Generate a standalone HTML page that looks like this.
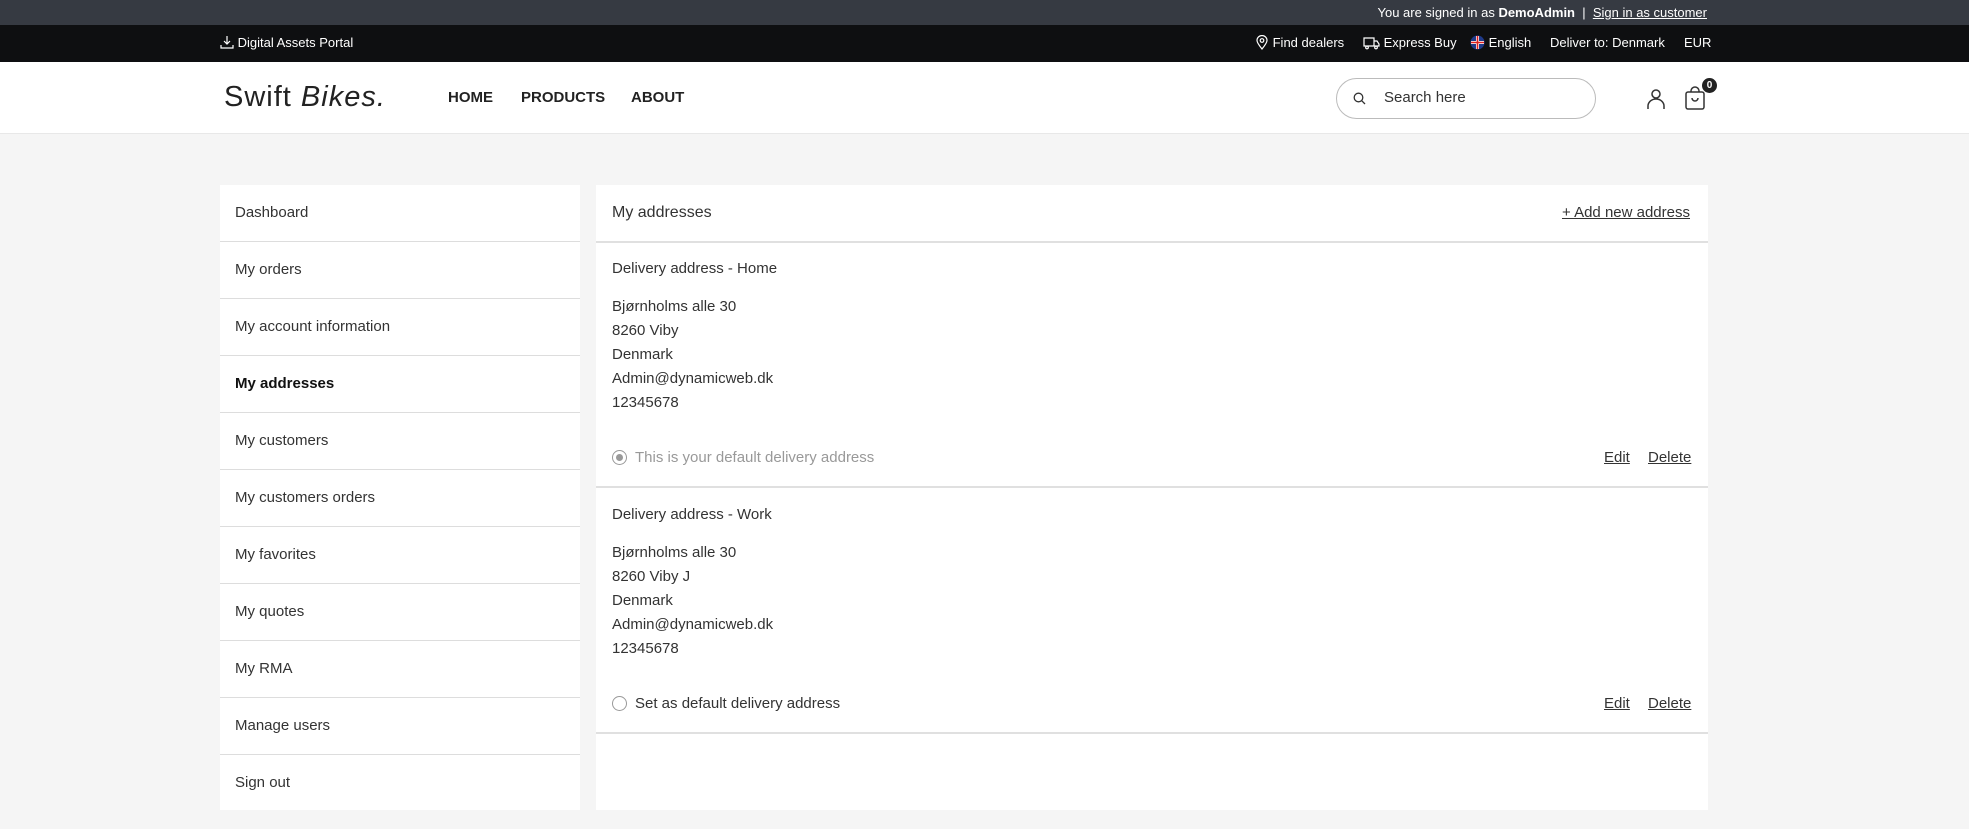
<!DOCTYPE html>
<html><head><meta charset="utf-8"><style>
*{margin:0;padding:0;box-sizing:border-box}
body{width:1969px;height:829px;background:#f5f5f5;font-family:"Liberation Sans",sans-serif;color:#222;position:relative;overflow:hidden}
.a{position:absolute;white-space:nowrap}
#t1{left:0;top:0;width:1969px;height:25px;background:#363a42}
#t2{left:0;top:25px;width:1969px;height:37px;background:#0e0f11}
#hd{left:0;top:62px;width:1969px;height:72px;background:#fff;border-bottom:1px solid #e8e8e8}
.w{color:#fff;font-size:13px}
.side{left:220px;top:185px;width:360px;height:625px;background:#fff}
.side div{height:57px;border-bottom:1px solid #ddd;padding-left:15px;line-height:56px;font-size:15px;color:#333}
.side div:last-child{border-bottom:none}
.main{left:596px;top:185px;width:1112px;height:625px;background:#fff}
.tx{font-size:15px;color:#333}
u{text-decoration:underline}
.sep{position:absolute;left:0;width:1112px;height:2px;background:#e0e0e0}
</style></head><body>
<div id="t1" class="a"></div>
<div id="t2" class="a"></div>
<div id="hd" class="a"></div>
<div class="a w" style="right:262px;top:5px">You are signed in as <b>DemoAdmin</b> &nbsp;|&nbsp; <u>Sign in as customer</u></div>
<div class="a w" style="left:220px;top:35px"><svg width="14" height="14" viewBox="0 0 14 14" style="vertical-align:-2px" fill="none" stroke="#fff" stroke-width="1.2"><path d="M7 1v8M4 6l3 3 3-3M1 10v3h12v-3"/></svg> Digital Assets Portal</div>
<div class="a w" style="left:1255px;top:35px"><svg width="14" height="15" viewBox="0 0 14 15" style="vertical-align:-3px" fill="none" stroke="#fff" stroke-width="1.2"><path d="M7 14C3 9 2 7 2 5.5a5 5 0 0 1 10 0C12 7 11 9 7 14z"/><circle cx="7" cy="5.5" r="1.8"/></svg> Find dealers</div>
<div class="a w" style="left:1363px;top:35px"><svg width="17" height="14" viewBox="0 0 17 14" style="vertical-align:-3px" fill="none" stroke="#fff" stroke-width="1.2"><path d="M1 2h10v8H1zM11 5h3l2 3v2h-5"/><circle cx="4" cy="11.5" r="1.3"/><circle cx="13" cy="11.5" r="1.3"/></svg> Express Buy</div>
<div class="a w" style="left:1470px;top:35px"><svg width="15" height="15" viewBox="0 0 15 15" style="vertical-align:-3px"><circle cx="7.5" cy="7.5" r="7" fill="#1f3a8a"/><path d="M1 7.5h13M7.5 1v13" stroke="#fff" stroke-width="3"/><path d="M1 7.5h13M7.5 1v13" stroke="#d22" stroke-width="1.6"/></svg> English</div>
<div class="a w" style="left:1550px;top:35px">Deliver to: Denmark</div>
<div class="a w" style="left:1684px;top:35px">EUR</div>
<div class="a" style="left:224px;top:81px;font-size:29px;color:#222;letter-spacing:1px">Swift <i>Bikes.</i></div>
<div class="a" style="left:448px;top:89px;font-size:15px;font-weight:bold;color:#222">HOME</div>
<div class="a" style="left:521px;top:89px;font-size:15px;font-weight:bold;color:#222">PRODUCTS</div>
<div class="a" style="left:631px;top:89px;font-size:15px;font-weight:bold;color:#222">ABOUT</div>
<div class="a" style="left:1336px;top:78px;width:260px;height:41px;border:1px solid #bbb;border-radius:21px;background:#fff"></div>
<svg class="a" style="left:1353px;top:92px" width="13" height="13" viewBox="0 0 13 13" fill="none" stroke="#333" stroke-width="1.3"><circle cx="5.5" cy="5.5" r="4.3"/><path d="M8.7 8.7L12 12"/></svg>
<div class="a" style="left:1384px;top:89px;font-size:15px;color:#333">Search here</div>
<svg class="a" style="left:1646px;top:88px" width="20" height="22" viewBox="0 0 20 22" fill="none" stroke="#333" stroke-width="1.5"><circle cx="10" cy="6" r="4"/><path d="M2 21v-3a8 7 0 0 1 16 0v3"/></svg>
<svg class="a" style="left:1684px;top:86px" width="22" height="24" viewBox="0 0 22 24" fill="none" stroke="#333" stroke-width="1.5"><rect x="2" y="6" width="18" height="17" rx="2"/><path d="M7 6V5a4 4 0 0 1 8 0v1M8 12a3 3 0 0 0 6 0"/></svg>
<div class="a" style="left:1702px;top:78px;width:15px;height:15px;border-radius:50%;background:#222;color:#fff;font-size:10px;font-weight:bold;text-align:center;line-height:15px">0</div>

<div class="a side">
<div>Dashboard</div><div>My orders</div><div>My account information</div><div style="font-weight:bold;color:#111">My addresses</div><div>My customers</div><div>My customers orders</div><div>My favorites</div><div>My quotes</div><div>My RMA</div><div>Manage users</div><div>Sign out</div>
</div>

<div class="a main">
<div class="a tx" style="left:16px;top:19px;font-size:16px">My addresses</div>
<div class="a tx" style="right:18px;top:19px"><u>+ Add new address</u></div>
<div class="sep" style="top:56px"></div>

<div class="a tx" style="left:16px;top:75px">Delivery address - Home</div>
<div class="a tx" style="left:16px;top:110px;line-height:24px">Bjørnholms alle 30<br>8260 Viby<br>Denmark<br>Admin@dynamicweb.dk<br>12345678</div>
<div class="a" style="left:16px;top:265px;width:15px;height:15px;border:1px solid #999;border-radius:50%"><div style="margin:3px;width:7px;height:7px;border-radius:50%;background:#999"></div></div>
<div class="a tx" style="left:39px;top:264px;color:#999">This is your default delivery address</div>
<div class="a tx" style="left:1008px;top:264px"><u>Edit</u></div>
<div class="a tx" style="left:1052px;top:264px"><u>Delete</u></div>
<div class="sep" style="top:301px"></div>

<div class="a tx" style="left:16px;top:321px">Delivery address - Work</div>
<div class="a tx" style="left:16px;top:356px;line-height:24px">Bjørnholms alle 30<br>8260 Viby J<br>Denmark<br>Admin@dynamicweb.dk<br>12345678</div>
<div class="a" style="left:16px;top:511px;width:15px;height:15px;border:1px solid #999;border-radius:50%"></div>
<div class="a tx" style="left:39px;top:510px">Set as default delivery address</div>
<div class="a tx" style="left:1008px;top:510px"><u>Edit</u></div>
<div class="a tx" style="left:1052px;top:510px"><u>Delete</u></div>
<div class="sep" style="top:547px"></div>
</div>
</body></html>
